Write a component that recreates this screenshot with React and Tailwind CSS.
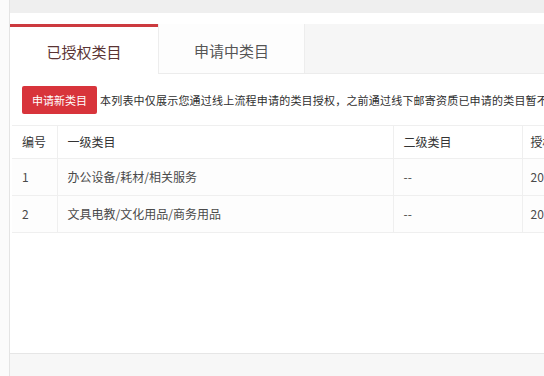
const rows = [
  { id: 1, first: '办公设备/耗材/相关服务', second: '--', date: '2019-03-12' },
  { id: 2, first: '文具电教/文化用品/商务用品', second: '--', date: '2019-03-12' },
];

export default function App() {
  return (
    <div className="h-[376px] w-[544px] overflow-hidden bg-[#fbfbfb] pl-[9px] font-['Noto_Sans_CJK_SC',sans-serif]">
      <div className="flex h-full flex-col border-l border-[#e4e4e4]">
        <div className="h-[13px] shrink-0 bg-[#efefef]" />
        <div className="h-[11px] shrink-0 bg-white" />

        <div className="flex h-[50px] shrink-0 border-b border-[#ececec] bg-[#f6f6f6]">
          <div className="-mb-px flex w-[148px] items-center justify-center border-t-[3px] border-[#cc3a3f] bg-white pt-[3px] text-[15px] text-[#5a3434]">
            已授权类目
          </div>
          <div className="flex w-[147px] items-center justify-center border-x border-[#ededed] bg-[#fdfdfd] pt-[6px] text-[15px] text-[#555]">
            申请中类目
          </div>
        </div>

        <div className="flex flex-1 flex-col bg-white">
          <div className="flex items-center gap-[3px] whitespace-nowrap pl-[12px] pt-[12px]">
            <button className="h-[28px] shrink-0 rounded-[2px] bg-[#d8343b] px-[10px] text-[11px] text-white">
              申请新类目
            </button>
            <span className="text-[11px] tracking-[0.2px] text-[#2e2e2e]">
              本列表中仅展示您通过线上流程申请的类目授权，之前通过线下邮寄资质已申请的类目暂不展示
            </span>
          </div>

          <div className="ml-[2px] mt-[11px] overflow-hidden">
            <table className="w-[600px] table-fixed border-collapse text-left text-[12px] text-[#4a4a4a]">
              <colgroup>
                <col className="w-[45px]" />
                <col className="w-[336px]" />
                <col className="w-[129px]" />
                <col />
              </colgroup>
              <thead>
                <tr className="h-[33px] border-y border-[#efefef] text-[#333]">
                  <th className="border-r border-[#efefef] pl-[10px] font-normal">编号</th>
                  <th className="border-r border-[#efefef] pl-[10px] font-normal">一级类目</th>
                  <th className="border-r border-[#efefef] pl-[10px] font-normal">二级类目</th>
                  <th className="pl-[8px] font-normal">授权时间</th>
                </tr>
              </thead>
              <tbody>
                {rows.map((row) => (
                  <tr key={row.id} className="h-[37px] border-b border-[#efefef] bg-[#fdfdfd]">
                    <td className="border-r border-[#efefef] pl-[10px]">{row.id}</td>
                    <td className="border-r border-[#efefef] pl-[10px]">{row.first}</td>
                    <td className="border-r border-[#efefef] pl-[10px]">{row.second}</td>
                    <td className="pl-[8px]">{row.date}</td>
                  </tr>
                ))}
              </tbody>
            </table>
          </div>
        </div>

        <div className="h-[23px] shrink-0 border-t border-[#e6e6e6] bg-[#f7f7f7]" />
      </div>
    </div>
  );
}
